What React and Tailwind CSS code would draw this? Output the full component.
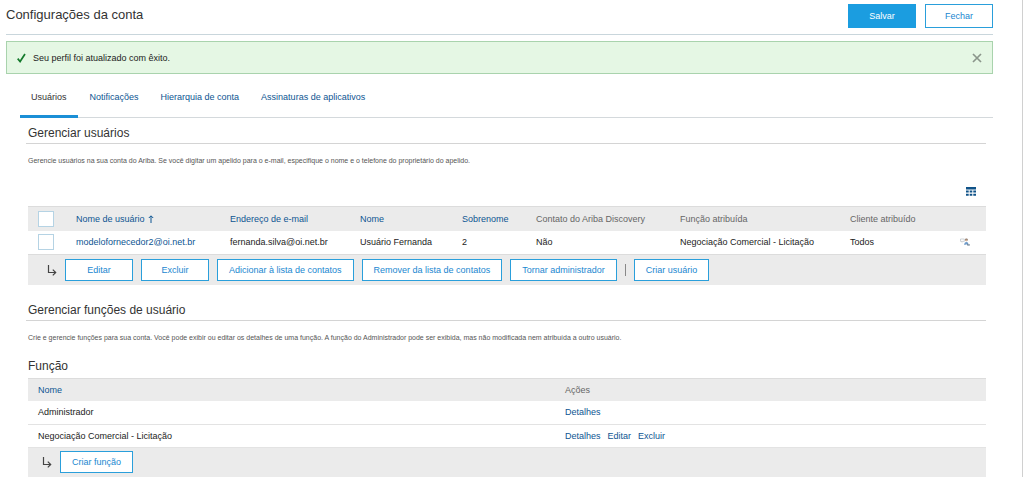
import { useState } from "react";

const userColumns = [
  { label: "Nome de usuário", width: "w-[154px]", sortable: true, sorted: true },
  { label: "Endereço de e-mail", width: "w-[130px]", sortable: true },
  { label: "Nome", width: "w-[102px]", sortable: true },
  { label: "Sobrenome", width: "w-[74px]", sortable: true },
  { label: "Contato do Ariba Discovery", width: "w-[144px]" },
  { label: "Função atribuída", width: "w-auto" },
  { label: "Cliente atribuído", width: "w-[110px]" },
];

const tabs = ["Notificações", "Hierarquia de conta", "Assinaturas de aplicativos"];

const roles = [
  { name: "Administrador", actions: ["Detalhes"] },
  { name: "Negociação Comercial - Licitação", actions: ["Detalhes", "Editar", "Excluir"] },
];

function OutlineButton({ children }) {
  return (
    <button className="h-[22px] min-w-[68px] border border-[#2a9fdb] bg-white px-[11px] whitespace-nowrap text-[#1a87d0]">
      {children}
    </button>
  );
}

function SectionHeading({ children }) {
  return (
    <h2 className="border-b border-[#d4d4d4] pb-0.5 pl-0.5 text-[12px] leading-4 text-[#333]">
      {children}
    </h2>
  );
}

function Checkbox({ label }) {
  return (
    <input
      type="checkbox"
      aria-label={label}
      className="block size-4 appearance-none border border-[#b5d3e4] bg-white checked:bg-[#1b9de0]"
    />
  );
}

function BranchArrow() {
  return (
    <svg viewBox="0 0 10 12" className="h-3 w-2.5 shrink-0" fill="none" stroke="#444" strokeWidth="1.2" aria-hidden="true">
      <path d="M1.5 1v7.5H8.5M5.8 5.6l2.9 2.9-2.9 2.9" />
    </svg>
  );
}

function SortArrow() {
  return (
    <svg viewBox="0 0 6 8" className="ml-[3px] inline h-2 w-1.5" fill="none" stroke="#0d5592" aria-hidden="true">
      <path d="M3 8V1M.8 3L3 .8 5.2 3" />
    </svg>
  );
}

function TableIcon() {
  return (
    <svg viewBox="0 0 10 9" className="h-[9px] w-2.5" fill="#0f5288" aria-hidden="true">
      <path d="M0 0h10v2.6H0zM0 3.5h2.7v2H0zM3.7 3.5h2.6v2H3.7zM7.3 3.5H10v2H7.3zM0 6.7h2.7v2H0zM3.7 6.7h2.6v2H3.7zM7.3 6.7H10v2H7.3z" />
    </svg>
  );
}

function ContactIcon() {
  return (
    <svg viewBox="0 0 10 8" className="block h-2 w-2.5" fill="none" aria-hidden="true">
      <path d="M.5 1h3.8v2.4H.5z" stroke="#b9c0c6" strokeWidth=".7" />
      <path d="M1.2 3.6l1.3 1.2" stroke="#c9c9c9" strokeWidth=".7" />
      <circle cx="6.4" cy="1.8" r="1.4" fill="#8b7263" />
      <circle cx="6.2" cy="2.4" r=".8" fill="#dfb99a" />
      <path d="M4.2 7c0-2 .8-3 2.2-3s1.8.8 2 2z" fill="#6f9ccb" />
      <path d="M7.2 7.4V5.5l1.2.9 1-.3.5 1.5z" fill="#5b7186" />
    </svg>
  );
}

export default function App() {
  const [alertOpen, setAlertOpen] = useState(true);

  return (
    <div className="mr-px border-r border-[#d0d0d0] bg-white pr-[29px] pl-1.5 font-['Liberation_Sans',Arial,sans-serif] text-[9px] leading-3 text-[#222]">
      <header className="flex items-start justify-between border-b border-[#c9d6dc] pt-1 pb-1.5">
        <h1 className="pt-0.5 text-[13px] leading-[18px] text-[#333]">Configurações da conta</h1>
        <div className="flex gap-[9px]">
          <button className="h-6 w-[68px] bg-[#1b9de0] text-white">Salvar</button>
          <button className="h-6 w-[68px] border border-[#2a9fdb] bg-white text-[#1a87d0]">Fechar</button>
        </div>
      </header>

      {alertOpen && (
        <div role="status" className="mt-1.5 flex h-[33px] items-center border border-[#a9d3ad] bg-[#e5f7e4] px-2.5">
          <svg viewBox="0 0 9 10" className="h-2.5 w-[9px]" fill="none" stroke="#157a2c" strokeWidth="1.7" aria-hidden="true">
            <path d="M.7 5.6l2.4 2.9L8 1" />
          </svg>
          <p className="ml-[7px] flex-1">Seu perfil foi atualizado com êxito.</p>
          <button aria-label="Dispensar" onClick={() => setAlertOpen(false)}>
            <svg viewBox="0 0 10 10" className="size-2.5" fill="none" stroke="#8b968b" strokeWidth="1.7" aria-hidden="true">
              <path d="M1 1l8 8M9 1L1 9" />
            </svg>
          </button>
        </div>
      )}

      <nav className="ml-3.5 flex h-11 items-stretch border-b border-[#d4d9dc] text-[#0d5592]">
        <a href="#usuarios" aria-current="page" className="-mb-px border-b-[3px] border-[#1b8fd6] px-[11px] pt-[17px] text-[#333]">
          Usuários
        </a>
        <div className="flex gap-[22px] pt-[17px] pl-3">
          {tabs.map((tab) => (
            <a key={tab} href="#conta">{tab}</a>
          ))}
        </div>
      </nav>

      <main className="mr-[7px] ml-5">
        <section className="pt-[7px]">
          <SectionHeading>Gerenciar usuários</SectionHeading>
          <p className="mt-[11px] pl-0.5 text-[7px] text-[#555]">
            Gerencie usuários na sua conta do Ariba. Se você digitar um apelido para o e-mail, especifique o nome e o telefone do proprietário do apelido.
          </p>
          <div className="mt-5 flex justify-end pr-2.5">
            <button aria-label="Opções da tabela"><TableIcon /></button>
          </div>
          <div className="pt-2.5 pl-0.5">
            <table className="w-full table-fixed text-left">
              <thead>
                <tr className="h-6 border-t border-[#dcdcdc] bg-[#ebebeb] text-[#666]">
                  <th className="w-[38px] pl-2.5"><Checkbox label="Selecionar todos" /></th>
                  {userColumns.map((c) => (
                    <th key={c.label} className={`${c.width} pl-2.5 font-normal whitespace-nowrap`}>
                      {c.sortable ? (
                        <a href="#ordenar" className="text-[#0d5592]">{c.label}{c.sorted && <SortArrow />}</a>
                      ) : c.label}
                    </th>
                  ))}
                  <th className="w-9" />
                </tr>
              </thead>
              <tbody>
                <tr className="h-[23px] whitespace-nowrap">
                  <td className="pl-2.5"><Checkbox label="Selecionar modelofornecedor2@oi.net.br" /></td>
                  <td className="pl-2.5"><a href="#usuario" className="text-[#0d5592]">modelofornecedor2@oi.net.br</a></td>
                  <td className="pl-2.5">fernanda.silva@oi.net.br</td>
                  <td className="pl-2.5">Usuário Fernanda</td>
                  <td className="pl-2.5">2</td>
                  <td className="pl-2.5">Não</td>
                  <td className="pl-2.5">Negociação Comercial - Licitação</td>
                  <td className="pl-2.5">Todos</td>
                  <td className="pl-2.5"><ContactIcon /></td>
                </tr>
              </tbody>
            </table>
            <div className="flex h-[31px] items-center gap-2 border-t border-[#dcdcdc] bg-[#ebebeb] pl-[19px]">
              <BranchArrow />
              <OutlineButton>Editar</OutlineButton>
              <OutlineButton>Excluir</OutlineButton>
              <OutlineButton>Adicionar à lista de contatos</OutlineButton>
              <OutlineButton>Remover da lista de contatos</OutlineButton>
              <OutlineButton>Tornar administrador</OutlineButton>
              <span className="h-3 w-px bg-[#888]" />
              <OutlineButton>Criar usuário</OutlineButton>
            </div>
          </div>
        </section>

        <section className="pt-[17px]">
          <SectionHeading>Gerenciar funções de usuário</SectionHeading>
          <p className="mt-[11px] pl-0.5 text-[7px] text-[#555]">
            Crie e gerencie funções para sua conta. Você pode exibir ou editar os detalhes de uma função. A função do Administrador pode ser exibida, mas não modificada nem atribuída a outro usuário.
          </p>
          <div className="pt-3.5 pl-0.5">
            <h3 className="pb-1 text-[12px] leading-4 text-[#333]">Função</h3>
            <table className="w-full table-fixed text-left">
              <thead>
                <tr className="h-[23px] border-t border-[#dcdcdc] bg-[#ebebeb] text-[#666]">
                  <th className="w-[55%] pl-2.5 font-normal"><a href="#ordenar" className="text-[#0d5592]">Nome</a></th>
                  <th className="pl-2.5 font-normal">Ações</th>
                </tr>
              </thead>
              <tbody>
                {roles.map((role) => (
                  <tr key={role.name} className="h-[23px] border-b border-[#e3e3e3]">
                    <td className="pl-2.5">{role.name}</td>
                    <td className="pl-2.5">
                      <div className="flex gap-[7px] text-[#0d5592]">
                        {role.actions.map((action) => (
                          <a key={action} href="#funcao">{action}</a>
                        ))}
                      </div>
                    </td>
                  </tr>
                ))}
              </tbody>
            </table>
            <div className="flex h-[29px] items-center gap-2 bg-[#ebebeb] pl-3.5">
              <BranchArrow />
              <OutlineButton>Criar função</OutlineButton>
            </div>
          </div>
        </section>
      </main>
    </div>
  );
}
